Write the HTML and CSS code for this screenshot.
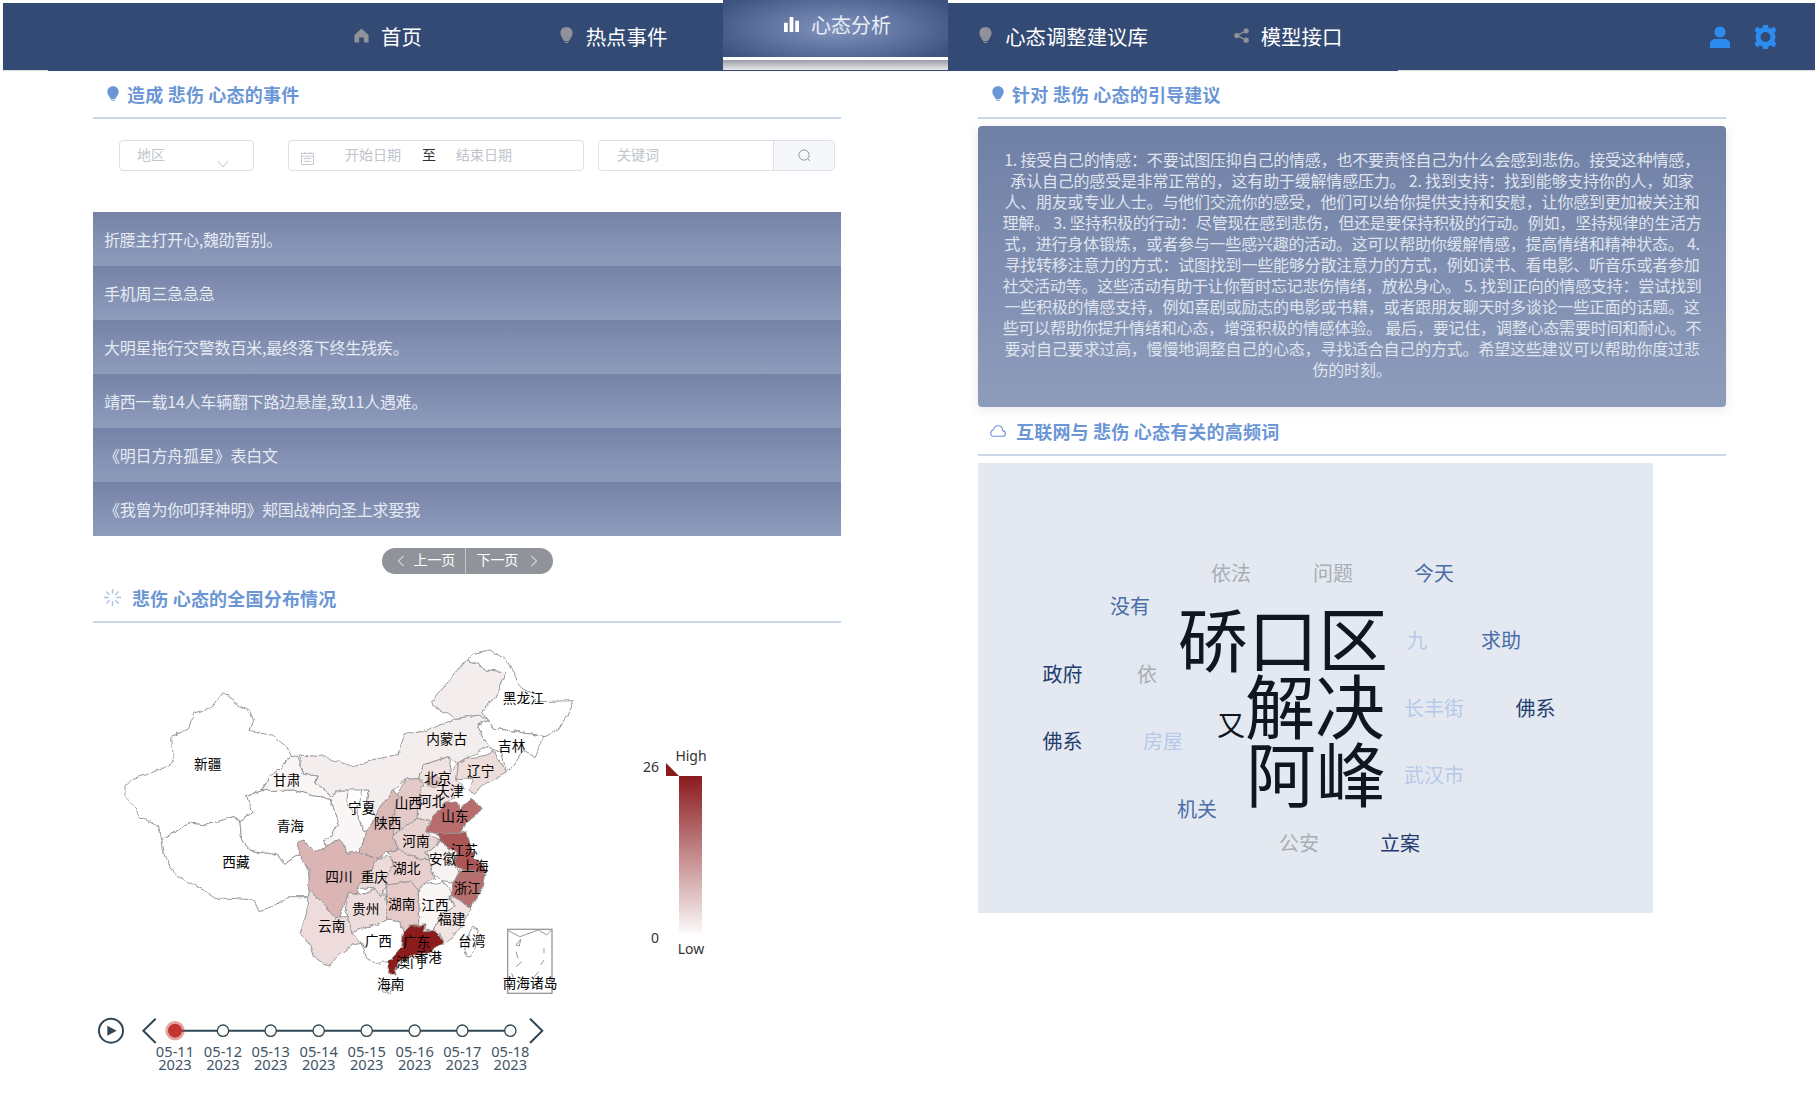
FILE: index.html
```html
<!DOCTYPE html>
<html lang="zh-CN">
<head>
<meta charset="utf-8">
<title>心态分析</title>
<link rel="stylesheet" href="styles.css">
</head>
<body>
<header class="topbar">
  <nav class="menu">
    <div class="tab"></div>
    <a class="tab"><svg class="tab-icon" viewBox="0 0 16 16"><path d="M8 0.5 L15.5 7.5 V15.5 H10.5 V10 H5.5 V15.5 H0.5 V7.5Z"/></svg>首页</a>
    <a class="tab"><svg class="tab-icon" viewBox="0 0 16 18"><path d="M8 0C3.9 0 1.5 3 1.5 6.5 1.5 10 4.5 12.5 5.5 15H10.5C11.5 12.5 14.5 10 14.5 6.5 14.5 3 12.1 0 8 0ZM6 16H10V17H6Z"/></svg>热点事件</a>
    <a class="tab active"><svg class="tab-icon bars" viewBox="0 0 16 16"><path d="M0 6H4V16H0ZM6 0H10V16H6ZM12 4H16V16H12Z"/></svg>心态分析</a>
    <a class="tab"><svg class="tab-icon" viewBox="0 0 16 18"><path d="M8 0C3.9 0 1.5 3 1.5 6.5 1.5 10 4.5 12.5 5.5 15H10.5C11.5 12.5 14.5 10 14.5 6.5 14.5 3 12.1 0 8 0ZM6 16H10V17H6Z"/></svg>心态调整建议库</a>
    <a class="tab"><svg class="tab-icon" viewBox="0 0 16 16"><circle cx="13" cy="3" r="2.8"/><circle cx="13" cy="13" r="2.8"/><circle cx="3" cy="8" r="2.8"/><path d="M13 3L3 8L13 13" fill="none" stroke="currentColor" stroke-width="1.4"/></svg>模型接口</a>
  </nav>
  <div class="tools">
    <svg class="tool user" viewBox="0 0 20 22"><circle cx="10" cy="6" r="5.6"/><path d="M0 22V17.5C0 14.5 3 13 5.5 13H14.5C17 13 20 14.5 20 17.5V22Z"/></svg>
    <svg class="tool gear" viewBox="0 0 24 24"><circle cx="12" cy="12" r="7.5" fill="none" stroke="currentColor" stroke-width="5"/><path d="M9.5 0H14.5L15 4H9ZM9.5 24H14.5L15 20H9ZM1 5.5L3.5 1.5L7 4L4 8.5ZM23 5.5L20.5 1.5L17 4L20 8.5ZM1 18.5L3.5 22.5L7 20L4 15.5ZM23 18.5L20.5 22.5L17 20L20 15.5Z"/></svg>
  </div>
</header>

<main class="main">
  <section class="col">
    <h2 class="head"><svg class="head-icon" viewBox="0 0 16 18"><path d="M8 0C3.9 0 1.5 3 1.5 6.5 1.5 10 4.5 12.5 5.5 15H10.5C11.5 12.5 14.5 10 14.5 6.5 14.5 3 12.1 0 8 0ZM6 16H10V17H6Z"/></svg>造成 悲伤 心态的事件</h2>
    <div class="filters">
      <div class="field select"><span>地区</span><svg class="chev" viewBox="0 0 12 8"><path d="M1 1L6 7L11 1" fill="none" stroke="currentColor"/></svg></div>
      <div class="field dates">
        <svg class="cal" viewBox="0 0 14 14"><path d="M0.5 1.5H13.5V13.5H0.5ZM0.5 4.5H13.5M3 7H11M3 10H11M4 0V2M10 0V2" fill="none" stroke="currentColor"/></svg>
        <span class="date-a">开始日期</span><span class="date-to">至</span><span class="date-b">结束日期</span>
      </div>
      <div class="field keyword">
        <span class="kw">关键词</span>
        <span class="search"><svg viewBox="0 0 14 14"><circle cx="6.5" cy="6.5" r="5.5" fill="none" stroke="currentColor"/><path d="M10.5 10.5L13 13" fill="none" stroke="currentColor"/></svg></span>
      </div>
    </div>
    <ul class="events">
      <li>折腰主打开心,魏劭暂别。</li>
      <li>手机周三急急急</li>
      <li>大明星拖行交警数百米,最终落下终生残疾。</li>
      <li>靖西一载14人车辆翻下路边悬崖,致11人遇难。</li>
      <li>《明日方舟孤星》表白文</li>
      <li>《我曾为你叩拜神明》郏国战神向圣上求娶我</li>
    </ul>
    <div class="pager">
      <a class="page prev"><svg viewBox="0 0 8 12"><path d="M6.5 1L1.5 6L6.5 11" fill="none" stroke="currentColor"/></svg><span>上一页</span></a>
      <a class="page next"><span>下一页</span><svg viewBox="0 0 8 12"><path d="M1.5 1L6.5 6L1.5 11" fill="none" stroke="currentColor"/></svg></a>
    </div>
    <h2 class="head head-second"><svg class="head-icon spin" viewBox="0 0 18 18"><path d="M9 0V5M9 13V18M0 9H5M13 9H18M2.6 2.6L6 6M12 12L15.4 15.4M15.4 2.6L12 6M6 12L2.6 15.4" fill="none" stroke="currentColor" stroke-width="1.5"/></svg>悲伤 心态的全国分布情况</h2>

    <svg class="chart" viewBox="0 0 748 477">
      <defs>
        <linearGradient id="scale" x1="0" y1="0" x2="0" y2="1"><stop offset="0" stop-color="#8b1a1d"/><stop offset="1" stop-color="#fbf8f8"/></linearGradient>
        <filter id="rough" filterUnits="userSpaceOnUse" x="0" y="0" width="1500" height="1140">
          <feTurbulence type="fractalNoise" baseFrequency="0.035" numOctaves="3" seed="4"/>
          <feDisplacementMap in="SourceGraphic" scale="16" xChannelSelector="R" yChannelSelector="G"/>
        </filter>
      </defs>
      <g transform="translate(-3 17) scale(.33333)">
        <g class="provinces" filter="url(#rough)">
          <path fill="#fff" d="M105 440L130 415 185 400 250 365 245 290 300 265 310 220 365 205 395 162 415 165 445 195 480 215 490 240 480 275 545 285 590 320 605 350 575 380 540 410 515 452 470 470 490 520 450 545 430 530 350 555 300 550 240 585 215 595 205 560 150 530 125 490 105 470Z"/>
          <path fill="#fff" d="M215 595L240 585 300 550 350 555 430 530 450 545 455 600 480 630 560 645 585 670 625 645 640 660 655 690 660 750 650 770 600 770 545 800 510 812 490 780 430 775 375 775 340 750 300 730 270 715 240 680 220 630Z"/>
          <path fill="#fff" d="M470 470L515 452 610 450 660 465 720 475 745 545 720 590 700 600 715 625 735 600 750 600 735 620 660 640 625 645 585 670 560 645 480 630 455 600 450 545 490 520Z"/>
          <path fill="#f9f6f5" d="M605 350L620 348 640 400 685 405 675 430 720 465 750 450 775 450 770 490 800 520 820 570 830 575 810 635 775 640 750 600 735 600 715 625 700 600 720 590 745 545 720 475 660 465 610 450 515 452 540 410 575 380Z"/>
          <path fill="#fff" d="M815 450L835 450 830 490 855 530 835 575 820 570 800 520 810 480Z"/>
          <path fill="#f4eded" d="M625 345L700 350 790 380 870 355 920 345 940 285 1010 270 1100 235 1165 225 1195 235 1160 260 1195 320 1130 355 1105 370 1075 350 1000 375 985 420 950 415 910 450 880 490 855 530 830 490 835 450 815 450 775 450 750 450 720 465 675 430 685 405 640 400Z"/>
          <path fill="#f4eded" d="M1025 185L1075 125 1130 60 1160 70 1190 90 1250 95 1215 175 1175 215 1195 235 1165 225 1100 235 1030 200Z"/>
          <path fill="#fff" d="M1130 60L1150 40 1200 30 1250 60 1285 130 1340 185 1450 182 1430 230 1405 270 1365 290 1280 275 1210 265 1195 240 1175 215 1215 175 1250 95 1190 90 1160 70Z"/>
          <path fill="#fff" d="M1160 260L1195 240 1210 265 1280 275 1365 290 1335 350 1300 330 1250 400 1235 340 1195 320Z"/>
          <path fill="#ecdcda" d="M1105 370L1130 355 1195 345 1210 330 1250 400 1190 430 1150 465 1140 450 1150 415 1100 420Z"/>
          <path fill="#f0e3e2" d="M1000 375L1075 350 1085 395 1105 370 1100 420 1125 445 1080 480 1020 545 985 535 985 470 1000 420 985 420Z"/>
          <path fill="#dcc0bf" d="M1015 415L1040 405 1055 425 1035 445 1015 435Z"/>
          <path fill="#e3c9c8" d="M985 420L1000 430 985 470 985 535 945 560 910 590 910 530 915 470 950 415Z"/>
          <path fill="#dbb9b7" d="M910 450L925 470 910 530 910 590 925 630 890 635 865 655 810 635 830 575 855 530 880 490Z"/>
          <path fill="#e8d2d0" d="M910 590L945 560 985 535 1020 545 1010 575 1050 600 1040 620 1010 635 1015 660 965 650 925 630Z"/>
          <path fill="#b86c6c" d="M1010 575L1020 545 1060 490 1105 485 1110 510 1140 475 1180 505 1130 545 1110 580 1040 580Z"/>
          <path fill="#f8f3f2" d="M1050 600L1060 610 1100 640 1090 670 1110 690 1090 730 1060 725 1030 700 1015 660 1010 635 1040 620Z"/>
          <path fill="#ad5656" d="M1040 580L1110 580 1130 575 1150 650 1190 690 1180 700 1120 690 1090 670 1100 640 1060 610Z"/>
          <path fill="#b56f6e" d="M1110 690L1185 700 1175 750 1140 805 1080 765 1095 720Z"/>
          <path fill="#e8cfce" d="M890 635L925 630 965 650 1015 660 1035 715 1000 735 985 750 960 725 890 735 885 710 910 680 905 650Z"/>
          <path fill="#ecdbd9" d="M865 655L890 650 905 650 910 680 885 710 890 735 875 770 855 745 800 745 815 720 850 680Z"/>
          <path fill="#dab5b3" d="M625 605L645 600 670 635 705 625 745 600 775 640 810 635 865 655 850 680 815 720 800 745 810 765 775 760 750 830 735 835 700 790 655 750 660 690 625 645Z"/>
          <path fill="#ecdcdb" d="M775 760L810 765 855 745 875 770 885 760 890 790 890 840 860 855 830 860 785 880 775 830 765 815Z"/>
          <path fill="#e5cac9" d="M890 735L960 725 985 750 990 860 960 855 940 875 925 845 890 840Z"/>
          <path fill="#faf6f5" d="M985 750L1000 735 1060 725 1085 760 1080 770 1095 800 1045 830 1030 880 975 855 990 860Z"/>
          <path fill="#f1e3e2" d="M1080 765L1140 805 1115 860 1060 915 1050 880 1030 880 1045 830 1095 800Z"/>
          <path fill="#8c1a1a" d="M940 875L960 855 1005 855 1000 875 1040 870 1060 910 1020 935 970 945 925 965 915 1005 900 1005 895 965 935 925Z"/>
          <path fill="#fff" d="M785 880L830 860 860 855 890 840 925 845 940 875 935 925 895 965 860 970 830 955 815 910Z"/>
          <path fill="#eddcdb" d="M655 750L700 790 735 835 750 830 775 830 785 880 815 910 785 915 770 930 745 945 720 975 700 970 670 950 655 900 630 880 650 820Z"/>
          <path fill="#fff" d="M875 1050L905 1045 915 1030 895 1065Z"/>
          <path fill="#fff" d="M1150 860L1165 870 1145 950 1130 950 1120 925Z"/>
        </g>
        <rect class="inset" x="1253" y="868" width="133" height="192"/>
        <path class="inset-lines" d="M1255 872L1290 890 1345 870 1370 885 1386 868M1278 915L1292 898 1288 918ZM1278 935L1284 955M1295 965L1278 980M1362 925V940M1362 960L1352 975M1345 995L1330 1015M1265 1000L1270 1015"/>
        <g class="labels" transform="translate(0 -3)">
          <text x="353" y="372">新疆</text><text x="590" y="420">甘肃</text><text x="601" y="557">青海</text><text x="438" y="665">西藏</text><text x="815" y="503">宁夏</text><text x="893" y="550">陕西</text><text x="955" y="490">山西</text><text x="1025" y="482">河北</text><text x="1043" y="415">北京</text><text x="1080" y="452">天津</text><text x="1070" y="297">内蒙古</text><text x="1172" y="393">辽宁</text><text x="1265" y="318">吉林</text><text x="1300" y="175">黑龙江</text><text x="1095" y="528">山东</text><text x="978" y="603">河南</text><text x="1123" y="630">江苏</text><text x="1058" y="658">安徽</text><text x="1155" y="678">上海</text><text x="950" y="685">湖北</text><text x="747" y="710">四川</text><text x="853" y="710">重庆</text><text x="1132" y="745">浙江</text><text x="935" y="793">湖南</text><text x="1035" y="795">江西</text><text x="827" y="807">贵州</text><text x="1085" y="836">福建</text><text x="725" y="858">云南</text><text x="865" y="902">广西</text><text x="980" y="905">广东</text><text x="1145" y="903">台湾</text><text x="1015" y="952">香港</text><text x="960" y="965">澳门</text><text x="902" y="1032">海南</text><text x="1320" y="1030">南海诸岛</text>
        </g>
      </g>
      <g class="legend">
        <rect x="586" y="153" width="23" height="157" fill="url(#scale)"/>
        <path d="M573 140L586 153H573Z" fill="#8b1a1d"/>
        <text x="566" y="143" text-anchor="end">26</text>
        <text x="598" y="132" text-anchor="middle">High</text>
        <text x="566" y="314" text-anchor="end">0</text>
        <text x="598" y="325" text-anchor="middle">Low</text>
      </g>
      <g transform="translate(-3 357) scale(.33333)">
        <g class="timeline">
          <circle class="tl-ring" cx="63" cy="152" r="36"/>
          <path class="tl-fill" d="M52 137L80 152 52 167Z"/>
          <path class="tl-chev" d="M197 116L160 152 197 189M1320 116L1357 152 1320 189"/>
          <path class="tl-line" d="M255 152H1261"/>
          <circle class="tl-halo" cx="255" cy="152" r="29"/>
          <circle class="tl-now" cx="255" cy="152" r="21"/>
          <circle class="tl-node" cx="399" cy="152" r="17"/><circle class="tl-node" cx="542" cy="152" r="17"/><circle class="tl-node" cx="686" cy="152" r="17"/><circle class="tl-node" cx="830" cy="152" r="17"/><circle class="tl-node" cx="974" cy="152" r="17"/><circle class="tl-node" cx="1117" cy="152" r="17"/><circle class="tl-node" cx="1261" cy="152" r="17"/>
          <g class="tl-text">
            <text x="255" y="230">05-11</text><text x="255" y="270">2023</text>
            <text x="399" y="230">05-12</text><text x="399" y="270">2023</text>
            <text x="542" y="230">05-13</text><text x="542" y="270">2023</text>
            <text x="686" y="230">05-14</text><text x="686" y="270">2023</text>
            <text x="830" y="230">05-15</text><text x="830" y="270">2023</text>
            <text x="974" y="230">05-16</text><text x="974" y="270">2023</text>
            <text x="1117" y="230">05-17</text><text x="1117" y="270">2023</text>
            <text x="1261" y="230">05-18</text><text x="1261" y="270">2023</text>
          </g>
        </g>
      </g>
    </svg>
  </section>

  <section class="col">
    <h2 class="head"><svg class="head-icon" viewBox="0 0 16 18"><path d="M8 0C3.9 0 1.5 3 1.5 6.5 1.5 10 4.5 12.5 5.5 15H10.5C11.5 12.5 14.5 10 14.5 6.5 14.5 3 12.1 0 8 0ZM6 16H10V17H6Z"/></svg>针对 悲伤 心态的引导建议</h2>
    <div class="advice">1. 接受自己的情感：不要试图压抑自己的情感，也不要责怪自己为什么会感到悲伤。接受这种情感，<br>承认自己的感受是非常正常的，这有助于缓解情感压力。 2. 找到支持：找到能够支持你的人，如家<br>人、朋友或专业人士。与他们交流你的感受，他们可以给你提供支持和安慰，让你感到更加被关注和<br>理解。 3. 坚持积极的行动：尽管现在感到悲伤，但还是要保持积极的行动。例如，坚持规律的生活方<br>式，进行身体锻炼，或者参与一些感兴趣的活动。这可以帮助你缓解情感，提高情绪和精神状态。 4.<br>寻找转移注意力的方式：试图找到一些能够分散注意力的方式，例如读书、看电影、听音乐或者参加<br>社交活动等。这些活动有助于让你暂时忘记悲伤情绪，放松身心。 5. 找到正向的情感支持：尝试找到<br>一些积极的情感支持，例如喜剧或励志的电影或书籍，或者跟朋友聊天时多谈论一些正面的话题。这<br>些可以帮助你提升情绪和心态，增强积极的情感体验。 最后，要记住，调整心态需要时间和耐心。不<br>要对自己要求过高，慢慢地调整自己的心态，寻找适合自己的方式。希望这些建议可以帮助你度过悲<br>伤的时刻。</div>
    <h2 class="head head-third"><svg class="head-icon cloud" viewBox="0 0 18 14"><path d="M5 13H14C16 13 17.3 11.6 17.3 9.8 17.3 8 16 6.7 14.3 6.6 14 3.4 11.8 1 9 1 6.4 1 4.4 3 4 5.6 2.2 6 .8 7.5 .8 9.4 .8 11.4 2.6 13 5 13Z" fill="none" stroke="currentColor" stroke-width="1.2"/></svg>互联网与 悲伤 心态有关的高频词</h2>
    <svg class="cloud-box" viewBox="0 0 675 450">
      <text class="w grey" x="233" y="109">依法</text>
      <text class="w grey" x="335" y="109">问题</text>
      <text class="w mid" x="436" y="109">今天</text>
      <text class="w mid" x="132" y="142">没有</text>
      <text class="w big" x="200" y="173">硚口区</text>
      <text class="w light" x="429" y="176">九</text>
      <text class="w mid" x="503" y="176">求助</text>
      <text class="w navy" x="64.5" y="210">政府</text>
      <text class="w grey" x="159" y="210">依</text>
      <text class="w big" x="267" y="240">解决</text>
      <text class="w dark" x="239" y="261">又</text>
      <text class="w light" x="426" y="244">长丰街</text>
      <text class="w navy" x="537.5" y="244">佛系</text>
      <text class="w navy" x="64.5" y="277">佛系</text>
      <text class="w light" x="165" y="277">房屋</text>
      <text class="w big" x="268" y="308">阿峰</text>
      <text class="w light" x="426" y="311">武汉市</text>
      <text class="w mid" x="199" y="345">机关</text>
      <text class="w grey" x="301" y="379">公安</text>
      <text class="w navy" x="402" y="379">立案</text>
    </svg>
  </section>
</main>
</body>
</html>
```
FILE: styles.css
```css
* { box-sizing: border-box; }
html, body { margin: 0; padding: 0; overflow: hidden; height: 1100px; }
body {
  background: #fff;
  padding-top: 3px;
  font-family: "Noto Sans CJK SC", "Noto Sans", sans-serif;
  color: #333;
}
.topbar {
  display: flex;
  height: 67px;
  margin-left: 3px;
  background: #334a74;
  box-shadow: 0 1px 1px rgba(0, 0, 0, .12);
}
.menu {
  display: flex;
  height: 68px;
  margin-left: 45px;
  background: #334a74;
  position: relative;
}
.tab {
  display: flex;
  align-items: center;
  justify-content: center;
  width: 225px;
  font-size: 20.4px;
  color: #fff;
  padding: 0 0 3px 5px;
}
.tab-icon {
  width: 15px;
  height: 17px;
  margin-right: 12px;
  fill: #8f9298;
  color: #8f9298;
  flex: none;
}
.tab.active {
  height: 70px;
  margin-top: -3px;
  align-items: flex-start;
  padding: 11px 0 0 4px;
  line-height: 28px;
  font-size: 20px;
  color: #e9edf5;
  background:
    radial-gradient(ellipse 60% 75% at 50% 50%, #8294bd 0%, #5d719e 55%, #3d527f 100%) top / 100% 57px no-repeat,
    linear-gradient(#fff 3px, #9a9ea6 3px, #e6e6e6 100%) bottom / 100% 13px no-repeat;
}
.tab-icon.bars { fill: #fff; width: 15px; height: 15px; margin-top: 6px; }
.tools {
  margin-left: auto;
  display: flex;
  align-items: center;
  gap: 23px;
  padding-right: 37px;
}
.tool { fill: #2d8cf0; color: #2d8cf0; display: block; }
.user { width: 20px; height: 22px; }
.gear { width: 25px; height: 24px; }

.main {
  display: flex;
  gap: 137px;
  padding: 1px 0 0 93px;
}
.col { width: 748px; flex: none; }
.head {
  display: flex;
  align-items: center;
  height: 48px;
  margin: 0;
  padding: 0 0 0 13px;
  border-bottom: 2px solid #cbd6e8;
  font-size: 18px;
  font-weight: 700;
  letter-spacing: .2px;
  color: #6b96d6;
}
.head-icon {
  width: 14px;
  height: 18px;
  margin-right: 7px;
  fill: #6b96d6;
  color: #6b96d6;
  flex: none;
}
.head-second { height: 49px; padding-left: 11px; }
.head-second .head-icon.spin { width: 17px; height: 17px; margin-right: 11px; color: #a9c2e8; }
.head-third { height: 49px; padding-left: 12px; }
.head-third .head-icon.cloud { width: 16px; height: 14px; margin-right: 10px; }

.filters {
  display: flex;
  margin-top: 21px;
  padding-left: 26px;
  height: 31px;
}
.field {
  position: relative;
  display: flex;
  align-items: center;
  border: 1px solid #dcdfe6;
  border-radius: 4px;
  font-size: 14px;
  color: #c0c4cc;
}
.select span, .date-a, .date-to, .date-b, .kw { margin-bottom: 4px; }
.select { width: 135px; padding-left: 17px; }
.chev { position: absolute; right: 24px; bottom: 2px; width: 12px; height: 8px; }
.dates { width: 296px; margin-left: 34px; padding-left: 12px; }
.cal { width: 13px; height: 13px; margin-top: 6px; flex: none; }
.date-a { margin-left: 31px; }
.date-to { margin-left: 21px; margin-right: 20px; color: #303133; font-size: 14px; }
.keyword { width: 237px; margin-left: 14px; padding-left: 18px; }
.kw { flex: 1; }
.search {
  display: flex;
  align-items: center;
  justify-content: center;
  width: 61px;
  height: 100%;
  background: #f5f7fa;
  border-left: 1px solid #dcdfe6;
  border-radius: 0 4px 4px 0;
  color: #909399;
}
.search svg { width: 13px; height: 13px; }

.events {
  list-style: none;
  margin: 41px 0 0;
  padding: 0;
}
.events li {
  height: 54px;
  line-height: 54px;
  padding-left: 11px;
  font-size: 16px;
  letter-spacing: -.2px;
  color: #e6eaf2;
  background: linear-gradient(#7683a8, #8e9cbc);
}
.pager {
  display: flex;
  width: 171px;
  height: 26px;
  margin: 12px auto 0;
  background: #909399;
  border-radius: 13px;
  color: #fff;
  font-size: 14px;
  letter-spacing: -.1px;
}
.page {
  display: flex;
  align-items: center;
  flex: none;
}
.page span { margin-bottom: 4px; }
.page svg { width: 8px; height: 12px; }
.prev { width: 84px; padding-left: 15px; gap: 9px; border-right: 1px solid #c4c6cc; }
.next { width: 87px; padding-left: 11px; gap: 12px; }

.chart { display: block; width: 748px; height: 477px; }
.provinces path { stroke: #999; stroke-width: 3; stroke-linejoin: round; }
.inset { fill: #fff; stroke: #999; stroke-width: 4; }
.inset-lines { fill: none; stroke: #999; stroke-width: 3; }
.labels text {
  font-size: 41px;
  fill: #000;
  text-anchor: middle;
  dominant-baseline: central;
}
.legend text { font-family: "Noto Sans", sans-serif; font-size: 14px; fill: #333; dominant-baseline: central; }
.tl-ring { fill: none; stroke: #304654; stroke-width: 6; }
.tl-fill { fill: #304654; }
.tl-chev { fill: none; stroke: #304654; stroke-width: 6; }
.tl-line { stroke: #304654; stroke-width: 6; }
.tl-halo { fill: #c23531; opacity: .45; }
.tl-now { fill: #c23531; }
.tl-node { fill: #fff; stroke: #304654; stroke-width: 4; }
.tl-text text {
  font-family: "Noto Sans", sans-serif;
  font-size: 44px;
  fill: #3f5466;
  text-anchor: middle;
}

.advice {
  margin-top: 7px;
  height: 281px;
  padding: 23px 10px 0;
  border-radius: 4px;
  text-align: center;
  white-space: nowrap;
  font-size: 16px;
  letter-spacing: -.2px;
  line-height: 21px;
  color: #dfe4ee;
  background: linear-gradient(#7080a5, #8e9cbc);
  box-shadow: 0 2px 12px rgba(0, 0, 0, .1);
}
.cloud-box {
  display: block;
  width: 675px;
  height: 450px;
  margin-top: 7px;
  background: #e4e9f1;
}
.w { font-size: 20px; dominant-baseline: central; }
.big { font-size: 70px; fill: #10151f; }
.dark { font-size: 28px; fill: #10151f; }
.navy { fill: #233c6e; }
.mid { fill: #4a6ea8; }
.light { fill: #b6c9e8; }
.grey { fill: #a8aeb6; }
```
